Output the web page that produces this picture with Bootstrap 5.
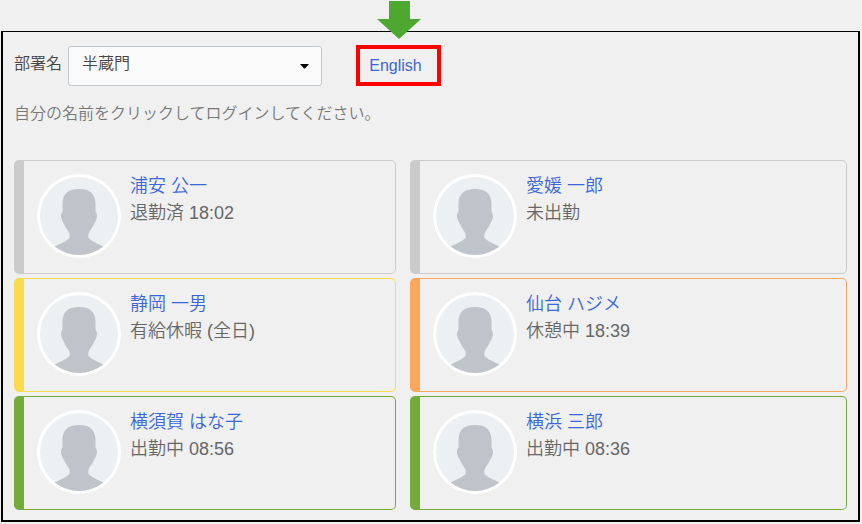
<!DOCTYPE html>
<html lang="ja">
<head>
<meta charset="utf-8">
<meta name="viewport" content="width=device-width, initial-scale=1">
<title>出退勤</title>
<link href="https://cdn.jsdelivr.net/npm/bootstrap@5.3.0/dist/css/bootstrap.min.css" rel="stylesheet">
<style>
body {
  background: #f0f0f0;
  color: #444;
  font-family: "Liberation Sans", "Noto Sans CJK JP", sans-serif;
  font-size: 16px;
  font-weight: 350;
  padding: 31px 2px 2px 1px;
}
a { color: #3a66dd; text-decoration: none; }
a:hover { text-decoration: underline; }
.panel-frame { border: 2px solid #000; border-top-width: 1px; padding: 14px 11px 10px; }
.dept-label { line-height: 36px; margin-right: 6px; }
.dept-select {
  width: 254px;
  height: 40px;
  padding: 0 32px 4px 13px;
  font-weight: 350;
  color: #444;
  background-color: #fafafa;
  border: 1px solid #bfc7cd;
  border-radius: 3px;
  background-image: url("data:image/svg+xml,%3Csvg xmlns='http://www.w3.org/2000/svg' viewBox='0 0 9 5'%3E%3Cpath d='M0 0h9L5 4.500H4z'/%3E%3C/svg%3E");
  background-size: 9px 5px;
  background-position: right 12px center;
}
.lang-link { border: 4px solid #f00; width: 85px; height: 41px; margin-left: 34px; margin-top: -1px; padding-right: 6px; }
.lang-arrow { left: 50%; bottom: 100%; margin: 0 0 10px -22px; }
.hint { color: #777; line-height: 24px; margin: 16px 0 34px; }
.staff-grid { gap: 4px 14px; grid-template-columns: 1fr; }
@media (min-width: 768px) {
  .staff-grid { grid-template-columns: minmax(0, 382fr) minmax(0, 437fr); }
}
.staff {
  min-height: 114px;
  padding: 12px 12px 13px 13px;
  border: 1px solid var(--state);
  border-left-width: 10px;
  border-radius: 5px;
  font-size: 18px;
  line-height: 27px;
  color: #666;
}
.state-off { --state: #cbcbcb; }
.state-leave { --state: #fadb4b; }
.state-break { --state: #fda75c; }
.state-on { --state: #74ac39; }
.avatar { width: 84px; height: 84px; margin: 1px 9px 0 0; }
</style>
<script src="https://cdn.jsdelivr.net/npm/bootstrap@5.3.0/dist/js/bootstrap.bundle.min.js" defer></script>
</head>
<body>
<svg class="d-none" aria-hidden="true">
  <symbol id="person" viewBox="0 0 84 84">
    <circle cx="42" cy="42" r="42" fill="#fff"/>
    <circle cx="42" cy="42" r="39" fill="#ecf0f3"/>
    <path fill="#bfc4cb" d="M42 15C32 15 25.500 19 25.500 30V38C24 39 23.700 42 24.300 44C25 47 26 48 27 50C28.500 54 30.500 56 32 58.500C33 61 33 63 32 64.500C28 68 22 70 17.700 72.500A39 39 0 0 0 66.300 72.500C62 70 56 68 52 64.500C51 63 51 61 52 58.500C54 55 56 53 57 50C58 48 59 47 59.700 44C60.300 42 60 39 58.500 38V30C58.500 19 52 15 42 15Z"/>
  </symbol>
</svg>
<main class="panel-frame">
  <div class="d-flex align-items-start">
    <label class="dept-label" for="dept">部署名</label>
    <select class="form-select dept-select" id="dept"><option>半蔵門</option></select>
    <a class="lang-link position-relative d-flex flex-shrink-0 align-items-center justify-content-center" href="#">
      English
      <svg class="lang-arrow position-absolute" width="44" height="38" viewBox="0 0 44 38" aria-hidden="true"><path d="M12 0H33V18H44L22 38L0 18H12Z" fill="#4ea72e"/></svg>
    </a>
  </div>
  <p class="hint">自分の名前をクリックしてログインしてください。</p>
  <div class="staff-grid d-grid">
    <section class="staff state-off d-flex">
      <svg class="avatar flex-shrink-0" aria-hidden="true"><use href="#person"/></svg>
      <div><a href="#">浦安 公一</a><div>退勤済 18:02</div></div>
    </section>
    <section class="staff state-off d-flex">
      <svg class="avatar flex-shrink-0" aria-hidden="true"><use href="#person"/></svg>
      <div><a href="#">愛媛 一郎</a><div>未出勤</div></div>
    </section>
    <section class="staff state-leave d-flex">
      <svg class="avatar flex-shrink-0" aria-hidden="true"><use href="#person"/></svg>
      <div><a href="#">静岡 一男</a><div>有給休暇 (全日)</div></div>
    </section>
    <section class="staff state-break d-flex">
      <svg class="avatar flex-shrink-0" aria-hidden="true"><use href="#person"/></svg>
      <div><a href="#">仙台 ハジメ</a><div>休憩中 18:39</div></div>
    </section>
    <section class="staff state-on d-flex">
      <svg class="avatar flex-shrink-0" aria-hidden="true"><use href="#person"/></svg>
      <div><a href="#">横須賀 はな子</a><div>出勤中 08:56</div></div>
    </section>
    <section class="staff state-on d-flex">
      <svg class="avatar flex-shrink-0" aria-hidden="true"><use href="#person"/></svg>
      <div><a href="#">横浜 三郎</a><div>出勤中 08:36</div></div>
    </section>
  </div>
</main>
</body>
</html>
